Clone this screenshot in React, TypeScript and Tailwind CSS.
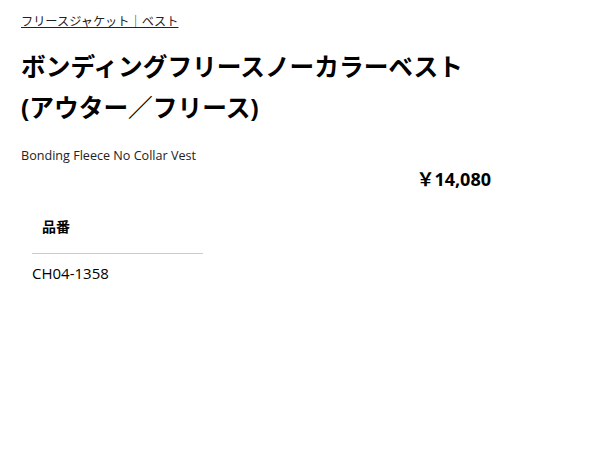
import React from 'react';

const App = () => {
  const font = { fontFamily: '"Open Sans", "Noto Sans CJK JP", sans-serif' };

  return (
    <div className="min-h-[450px] w-[600px] bg-white text-black" style={font}>
      <div className="px-[21px] pt-[8px]">
        <a href="#" className="text-[12.2px] leading-[18px] underline text-[#222]">
          フリースジャケット｜ベスト
        </a>
        <h1 className="mt-[14px] text-[24.7px] leading-[41px] font-bold">
          ボンディングフリースノーカラーベスト
          <br />
          (アウター／フリース)
        </h1>
        <p className="mt-[19px] text-[12.6px] leading-[18px] text-[#222]">Bonding Fleece No Collar Vest</p>
        <div className="mt-[2px] flex w-[470px] justify-end">
          <span className="text-[18px] font-bold leading-[24px]">￥14,080</span>
        </div>
        <table className="mt-[13px] ml-[11px] w-[171px] border-collapse text-left">
          <thead>
            <tr>
              <th className="border-b border-[#ccc] px-[10px] pt-[12px] pb-[16px] text-[14px] font-bold">品番</th>
            </tr>
          </thead>
          <tbody>
            <tr>
              <td className="py-[8px] text-[15px]">CH04-1358</td>
            </tr>
          </tbody>
        </table>
      </div>
    </div>
  );
};

export default App;
